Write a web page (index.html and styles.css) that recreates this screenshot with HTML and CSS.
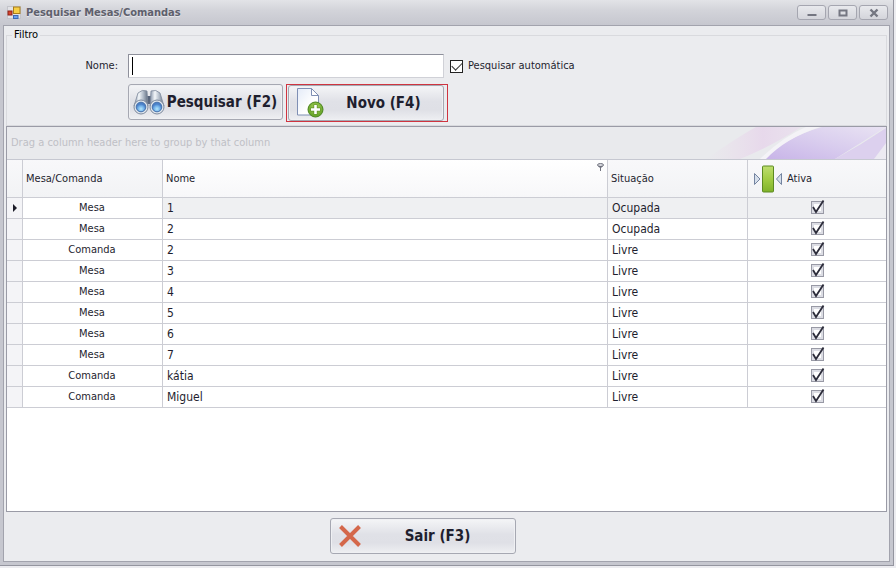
FILE: index.html
```html
<!DOCTYPE html>
<html lang="pt-BR">
<head>
<meta charset="utf-8">
<title>Pesquisar Mesas/Comandas</title>
<link rel="stylesheet" href="styles.css">
</head>
<body>
<svg class="defs" aria-hidden="true">
  <symbol id="tick" viewBox="0 0 15 15"><path d="M3 7l3 5 7.500-11.500" fill="none" stroke="#2c2c3a" stroke-width="1.800"/></symbol>
</svg>
<div class="window">
  <header class="titlebar">
    <svg class="app-icon" viewBox="0 0 14 14" aria-hidden="true">
      <rect x=".5" y=".5" width="13" height="12" fill="#e2e2e6" stroke="#c3c4ca"/>
      <rect x="6.500" y="1" width="6.500" height="6.500" fill="#f7cf45" stroke="#a87c1c"/>
      <rect x="1" y="5" width="4" height="4" fill="#d9442c" stroke="#8c2218"/>
      <rect x="6.500" y="9.500" width="4.500" height="3" fill="#6aa0ee" stroke="#3c68b4"/>
    </svg>
    <h1 class="title">Pesquisar Mesas/Comandas</h1>
    <div class="controls">
      <button class="control" type="button" aria-label="Minimizar"><svg viewBox="0 0 12 10"><path d="M1.500 7h9" stroke="#747681" stroke-width="2"/></svg></button>
      <button class="control" type="button" aria-label="Maximizar"><svg viewBox="0 0 12 10"><path d="M2.500 2.500h7v5h-7z" fill="none" stroke="#747681" stroke-width="2"/></svg></button>
      <button class="control" type="button" aria-label="Fechar"><svg viewBox="0 0 12 10"><path d="M2.500 1.500l7 7m0-7l-7 7" stroke="#747681" stroke-width="2.400"/></svg></button>
    </div>
  </header>
  <main class="client">
    <fieldset class="filter">
      <legend>Filtro</legend>
      <div class="filter-row">
        <label class="name-label" for="nome">Nome:</label>
        <input class="name-input" id="nome" type="text">
        <input class="auto-box" id="auto" type="checkbox" checked>
        <label for="auto">Pesquisar automática</label>
      </div>
      <div class="actions">
        <button class="btn btn-search" type="button">
          <svg class="icon-search" viewBox="0 0 32 26" aria-hidden="true">
            <defs>
              <linearGradient id="tube"><stop offset="0" stop-color="#8290a6"/><stop offset=".35" stop-color="#f4f7fa"/><stop offset=".65" stop-color="#b3bdca"/><stop offset="1" stop-color="#5f6c80"/></linearGradient>
              <radialGradient id="lens" cx=".5" cy=".7"><stop offset="0" stop-color="#b4e8fc"/><stop offset=".6" stop-color="#74b2ea"/><stop offset="1" stop-color="#4a80c8"/></radialGradient>
            </defs>
            <path d="M12 7h8v8h-8z" fill="#56637a"/>
            <path d="M5 4q4-4 9-2l1 15-14 0z" fill="url(#tube)" stroke="#7d899c" stroke-width=".8"/>
            <path d="M27 4q-4-4-9-2l-1 15 14 0z" fill="url(#tube)" stroke="#7d899c" stroke-width=".8"/>
            <circle cx="8" cy="18" r="7" fill="#dfe5ec" stroke="#7d899c"/>
            <circle cx="24" cy="18" r="7" fill="#dfe5ec" stroke="#7d899c"/>
            <circle cx="8" cy="18" r="4.800" fill="url(#lens)" stroke="#4571ac"/>
            <circle cx="24" cy="18" r="4.800" fill="url(#lens)" stroke="#4571ac"/>
          </svg>
          <span class="btn-text">Pesquisar (F2)</span>
        </button>
        <div class="highlight">
          <button class="btn btn-new" type="button">
            <svg class="icon-new" viewBox="0 0 27 30" aria-hidden="true">
              <defs>
                <linearGradient id="page" x1="0" y1="0" x2="1" y2="1"><stop offset="0" stop-color="#e4ebf8"/><stop offset=".6" stop-color="#fff"/></linearGradient>
                <radialGradient id="plus" cx=".5" cy=".4"><stop offset="0" stop-color="#b5dc62"/><stop offset="1" stop-color="#6aa62c"/></radialGradient>
              </defs>
              <path d="M.5.5h14l7 7v19.500H.5z" fill="url(#page)" stroke="#7f8fb4"/>
              <path d="M14.500.5v7h7z" fill="#fff" stroke="#7f8fb4"/>
              <circle cx="18.500" cy="21.500" r="7.500" fill="url(#plus)" stroke="#4b8420"/>
              <path d="M18.500 16.500v10M13.500 21.500h10" stroke="#5b8d28" stroke-width="4"/>
              <path d="M18.500 17v9M14 21.500h9" stroke="#fff" stroke-width="2.600"/>
            </svg>
            <span class="btn-text">Novo (F4)</span>
          </button>
        </div>
      </div>
    </fieldset>

    <section class="grid">
      <div class="group-panel">
        <span>Drag a column header here to group by that column</span>
        <svg class="swirl" viewBox="0 0 180 32" preserveAspectRatio="none" aria-hidden="true">
          <defs>
            <linearGradient id="pink"><stop offset="0" stop-color="#ecd6ea" stop-opacity="0"/><stop offset=".6" stop-color="#e6cdea" stop-opacity=".6"/><stop offset="1" stop-color="#ead9ee" stop-opacity=".5"/></linearGradient>
            <linearGradient id="violet" x1="0" y1="1" x2="1" y2="0"><stop offset="0" stop-color="#c8b4e8"/><stop offset=".5" stop-color="#d9cdee"/><stop offset="1" stop-color="#e9e3f3"/></linearGradient>
          </defs>
          <path d="M0 32Q35 8 50 0h45Q70 17 34 32z" fill="url(#pink)"/>
          <path d="M58 32Q80 10 116 0h64L129 32z" fill="url(#violet)"/>
          <path d="M129 32Q155 18 180 1v20l-6 11z" fill="#dcd0ee"/>
          <path d="M54 32Q78 9 100 0h14Q80 11 60 32z" fill="#f4f3f7"/>
          <path d="M180 16v16h-12z" fill="#eceaf2"/>
        </svg>
      </div>
      <table class="table">
        <colgroup><col class="c-ind"><col class="c-type"><col><col class="c-sit"><col class="c-act"></colgroup>
        <thead>
          <tr>
            <th></th>
            <th>Mesa/Comanda</th>
            <th class="sorted"><div class="head-filter">Nome <svg class="funnel" viewBox="0 0 7 8" aria-hidden="true"><ellipse cx="3.500" cy="2" rx="3" ry="1.500" fill="#d8d9de" stroke="#70727e"/><path d="M1 3l2 2v3h1V5l2-2z" fill="#70727e"/></svg></div></th>
            <th>Situação</th>
            <th><div class="head-active">
              <svg class="icon-col" viewBox="0 0 28 28" aria-hidden="true">
                <defs><linearGradient id="green" x1="0" y1="0" x2="0" y2="1"><stop offset="0" stop-color="#bede70"/><stop offset=".5" stop-color="#a1cc43"/><stop offset="1" stop-color="#7fb22a"/></linearGradient></defs>
                <path d="M.5 8.500v11l5.500-5.500z" fill="#d5deea" stroke="#7484a0"/>
                <path d="M27.500 8.500v11l-5-5.500z" fill="#d5deea" stroke="#7484a0"/>
                <rect x="8.500" y="1" width="11" height="26" rx="1" fill="url(#green)" stroke="#5c8a22"/>
              </svg>Ativa</div></th>
          </tr>
        </thead>
        <tbody>
          <tr class="current"><td><svg class="marker" viewBox="0 0 4 8" aria-label="Linha atual"><path d="M0 0v8l4-4z" fill="#1c1c28"/></svg></td><td>Mesa</td><td>1</td><td>Ocupada</td><td><span class="check"><input type="checkbox" checked aria-label="Ativa"><svg><use href="#tick"/></svg></span></td></tr>
          <tr><td></td><td>Mesa</td><td>2</td><td>Ocupada</td><td><span class="check"><input type="checkbox" checked aria-label="Ativa"><svg><use href="#tick"/></svg></span></td></tr>
          <tr><td></td><td>Comanda</td><td>2</td><td>Livre</td><td><span class="check"><input type="checkbox" checked aria-label="Ativa"><svg><use href="#tick"/></svg></span></td></tr>
          <tr><td></td><td>Mesa</td><td>3</td><td>Livre</td><td><span class="check"><input type="checkbox" checked aria-label="Ativa"><svg><use href="#tick"/></svg></span></td></tr>
          <tr><td></td><td>Mesa</td><td>4</td><td>Livre</td><td><span class="check"><input type="checkbox" checked aria-label="Ativa"><svg><use href="#tick"/></svg></span></td></tr>
          <tr><td></td><td>Mesa</td><td>5</td><td>Livre</td><td><span class="check"><input type="checkbox" checked aria-label="Ativa"><svg><use href="#tick"/></svg></span></td></tr>
          <tr><td></td><td>Mesa</td><td>6</td><td>Livre</td><td><span class="check"><input type="checkbox" checked aria-label="Ativa"><svg><use href="#tick"/></svg></span></td></tr>
          <tr><td></td><td>Mesa</td><td>7</td><td>Livre</td><td><span class="check"><input type="checkbox" checked aria-label="Ativa"><svg><use href="#tick"/></svg></span></td></tr>
          <tr><td></td><td>Comanda</td><td>kátia</td><td>Livre</td><td><span class="check"><input type="checkbox" checked aria-label="Ativa"><svg><use href="#tick"/></svg></span></td></tr>
          <tr><td></td><td>Comanda</td><td>Miguel</td><td>Livre</td><td><span class="check"><input type="checkbox" checked aria-label="Ativa"><svg><use href="#tick"/></svg></span></td></tr>
        </tbody>
      </table>
    </section>

    <footer class="footer">
      <button class="btn btn-exit" type="button">
        <svg class="icon-exit" viewBox="0 0 22 22" aria-hidden="true"><path d="M1.500 1.500l19 19m0-19l-19 19" stroke="#d4674a" stroke-width="4"/></svg>
        <span class="btn-text">Sair (F3)</span>
      </button>
    </footer>
  </main>
</div>
</body>
</html>
```

FILE: styles.css
```css
* { box-sizing: border-box; }

body {
  margin: 0;
  height: 100vh;
  padding: 0 2px 2px 0;
  background: #ececf0;
  color: #1e1e2e;
  font: 11px/16px Tahoma, "DejaVu Sans Condensed", "DejaVu Sans", sans-serif;
}

button, input { font: inherit; color: inherit; margin: 0; }
.defs { display: none; }
svg { display: block; flex: none; }

.window {
  display: flex;
  flex-direction: column;
  height: 100%;
  padding: 0 3px 3px;
  background: #c6c7cf;
  border: solid #94959f;
  border-width: 0 1px 1px 0;
}

.titlebar {
  display: flex;
  align-items: center;
  gap: 5px;
  height: 25px;
  margin: 0 -3px;
  padding: 0 5px 0 7px;
  background: linear-gradient(#e2e3e7, #d3d4da 40%, #c6c7cf);
}
.app-icon { width: 14px; height: 14px; }
.title {
  flex: 1;
  margin: 0;
  font-size: 11px;
  line-height: 16px;
  color: #5e606c;
  text-shadow: 0 1px #e6e7eb;
}
.controls { display: flex; gap: 2px; }
.control {
  display: grid;
  place-items: center;
  width: 29px;
  height: 15px;
  padding: 0;
  border: 1px solid #a5a6b0;
  border-radius: 3px;
  background: linear-gradient(#e8e9ed, #d4d5db);
}
.control svg { width: 12px; height: 10px; }

.client {
  flex: 1;
  display: flex;
  flex-direction: column;
  min-height: 0;
  padding: 1px 2px 0;
  background: #ebecef;
  border: 1px solid #a2a3ad;
}

.filter {
  min-width: 0;
  height: 99px;
  margin: 0;
  padding: 11px 0 0;
  border: 1px solid #d9dade;
}
.filter legend { margin-left: 5px; padding: 0 2px; color: #000; }
.filter-row { display: flex; align-items: center; height: 24px; }
.name-label { width: 111px; text-align: right; }
.name-input {
  width: 316px;
  height: 24px;
  margin: 0 6px 0 10px;
  padding: 0 4px;
  border: 1px solid #d0d1d7;
  border-top-color: #8e909b;
  border-left-color: #8e909b;
  background: linear-gradient(#000, #000) 3px 2px / 1px 18px no-repeat #fff;
  outline: 0;
}
.auto-box {
  appearance: none;
  width: 13px;
  height: 13px;
  margin-right: 5px;
  border: 1px solid #222;
  background: #fff;
  display: grid;
  place-items: center;
}
.auto-box::before {
  content: "";
  width: 9px;
  height: 5px;
  margin-top: -3px;
  border: solid #333;
  border-width: 0 0 1px 1px;
  transform: rotate(-45deg);
}

.actions { display: flex; gap: 3px; margin: 6px 0 0 121px; }
.btn {
  display: flex;
  align-items: center;
  height: 36px;
  padding: 0 4px;
  border: 1px solid #a6a8b2;
  border-radius: 3px;
  background: linear-gradient(#f4f5f7, #e0e1e7 45%, #dfe0e6 70%, #eeeff2);
  box-shadow: inset 0 0 0 1px #eff0f3;
  font-size: 15px;
  line-height: 18px;
  font-weight: bold;
  white-space: nowrap;
}
.btn-text { flex: 1; text-align: center; }
.btn-search { width: 155px; }
.icon-search { width: 32px; height: 26px; margin-right: 1px; }
.highlight { width: 162px; height: 38px; padding: 0 3px 0 1px; border: 1px solid #cf3440; }
.btn-new { width: 100%; padding: 0 0 0 8px; }
.icon-new { width: 27px; height: 30px; }

.grid {
  flex: 1;
  min-height: 0;
  overflow: hidden;
  background: #fff;
  border: 1px solid #9a9ba6;
}
.group-panel {
  display: flex;
  align-items: center;
  justify-content: space-between;
  height: 33px;
  padding-left: 4px;
  color: #bfc0c6;
  background: #e9eaed;
  border-bottom: 1px solid #c6c8d1;
}
.swirl { width: 180px; height: 32px; }

.table { width: 100%; table-layout: fixed; border-spacing: 0; }
.c-ind { width: 16px; }
.c-type, .c-sit { width: 140px; }
.c-act { width: 138px; }
th, td {
  padding: 0 4px;
  border: solid #cccdd4;
  border-width: 0 1px 1px 0;
  overflow: hidden;
  white-space: nowrap;
}
th:last-child, td:last-child { border-right: 0; }
th {
  height: 38px;
  padding: 0 3px;
  text-align: left;
  font-weight: normal;
  background: linear-gradient(#f8f8fa, #f2f3f5);
}
th.sorted { background: linear-gradient(#fff, #f7f7f9); }
.head-filter { display: flex; align-items: center; justify-content: space-between; height: 37px; }
.funnel { width: 7px; height: 8px; align-self: flex-start; margin-top: 3px; }
.head-active { display: flex; align-items: center; gap: 5px; padding-left: 3px; }
.icon-col { width: 28px; height: 28px; }

td { height: 21px; font-size: 12px; line-height: 16px; }
td:first-child { padding: 0; background: #f4f4f7; }
td:nth-child(2) { text-align: center; font-size: 11px; padding: 0 1px 0 0; }
.current td { background: #eff0f2; }
.current td:first-child { background: #f4f4f7; }
.current td:nth-child(2) { background: #fff; }
.marker { width: 4px; height: 8px; margin: auto; }

.check { display: grid; width: 15px; height: 15px; margin: 0 auto 1px; }
.check > * { grid-area: 1 / 1; }
.check input {
  appearance: none;
  width: 13px;
  height: 13px;
  margin-top: 1px;
  margin-left: 1px;
  border: 1px solid #9899a5;
  background: #fff;
  box-shadow: inset 0 0 0 2px #dcdde4;
}
.check svg { width: 15px; height: 15px; pointer-events: none; }

.footer { display: flex; justify-content: center; padding: 6px 0 7px; margin-right: 48px; }
.btn-exit { width: 186px; padding: 0 0 0 8px; }
.icon-exit { width: 22px; height: 22px; }
```
